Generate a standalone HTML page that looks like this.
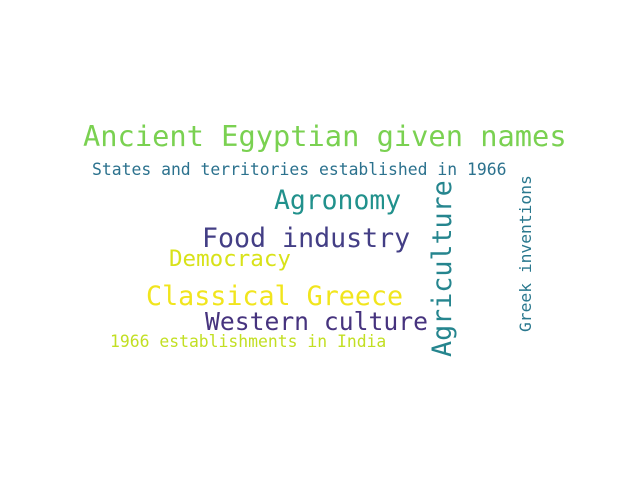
<!DOCTYPE html>
<html><head><style>html,body{margin:0;padding:0;background:#fff;width:640px;height:480px;overflow:hidden}</style></head>
<body>
<svg width="640" height="480" xmlns="http://www.w3.org/2000/svg" style="font-family:'DejaVu Sans Mono',monospace">
<rect width="640" height="480" fill="#fff"/>
<text x="83" y="146" font-size="28.7" fill="#7ad151">Ancient Egyptian given names</text>
<text x="92" y="175" font-size="16.4" fill="#2c728e">States and territories established in 1966</text>
<text x="274" y="209" font-size="26.4" fill="#21918c">Agronomy</text>
<text x="202" y="247" font-size="26.6" fill="#433e85">Food industry</text>
<text x="169" y="266" font-size="22.5" fill="#d8e219">Democracy</text>
<text x="146" y="305" font-size="26.7" fill="#f1e51d">Classical Greece</text>
<text x="205" y="330" font-size="24.7" fill="#46337e">Western culture</text>
<text x="110" y="347" font-size="16.4" fill="#c2df23">1966 establishments in India</text>
<text transform="translate(451,357) rotate(-90)" font-size="26.7" fill="#25858e">Agriculture</text>
<text transform="translate(531,332) rotate(-90)" font-size="16.3" fill="#2a788e">Greek inventions</text>
</svg>
</body></html>
